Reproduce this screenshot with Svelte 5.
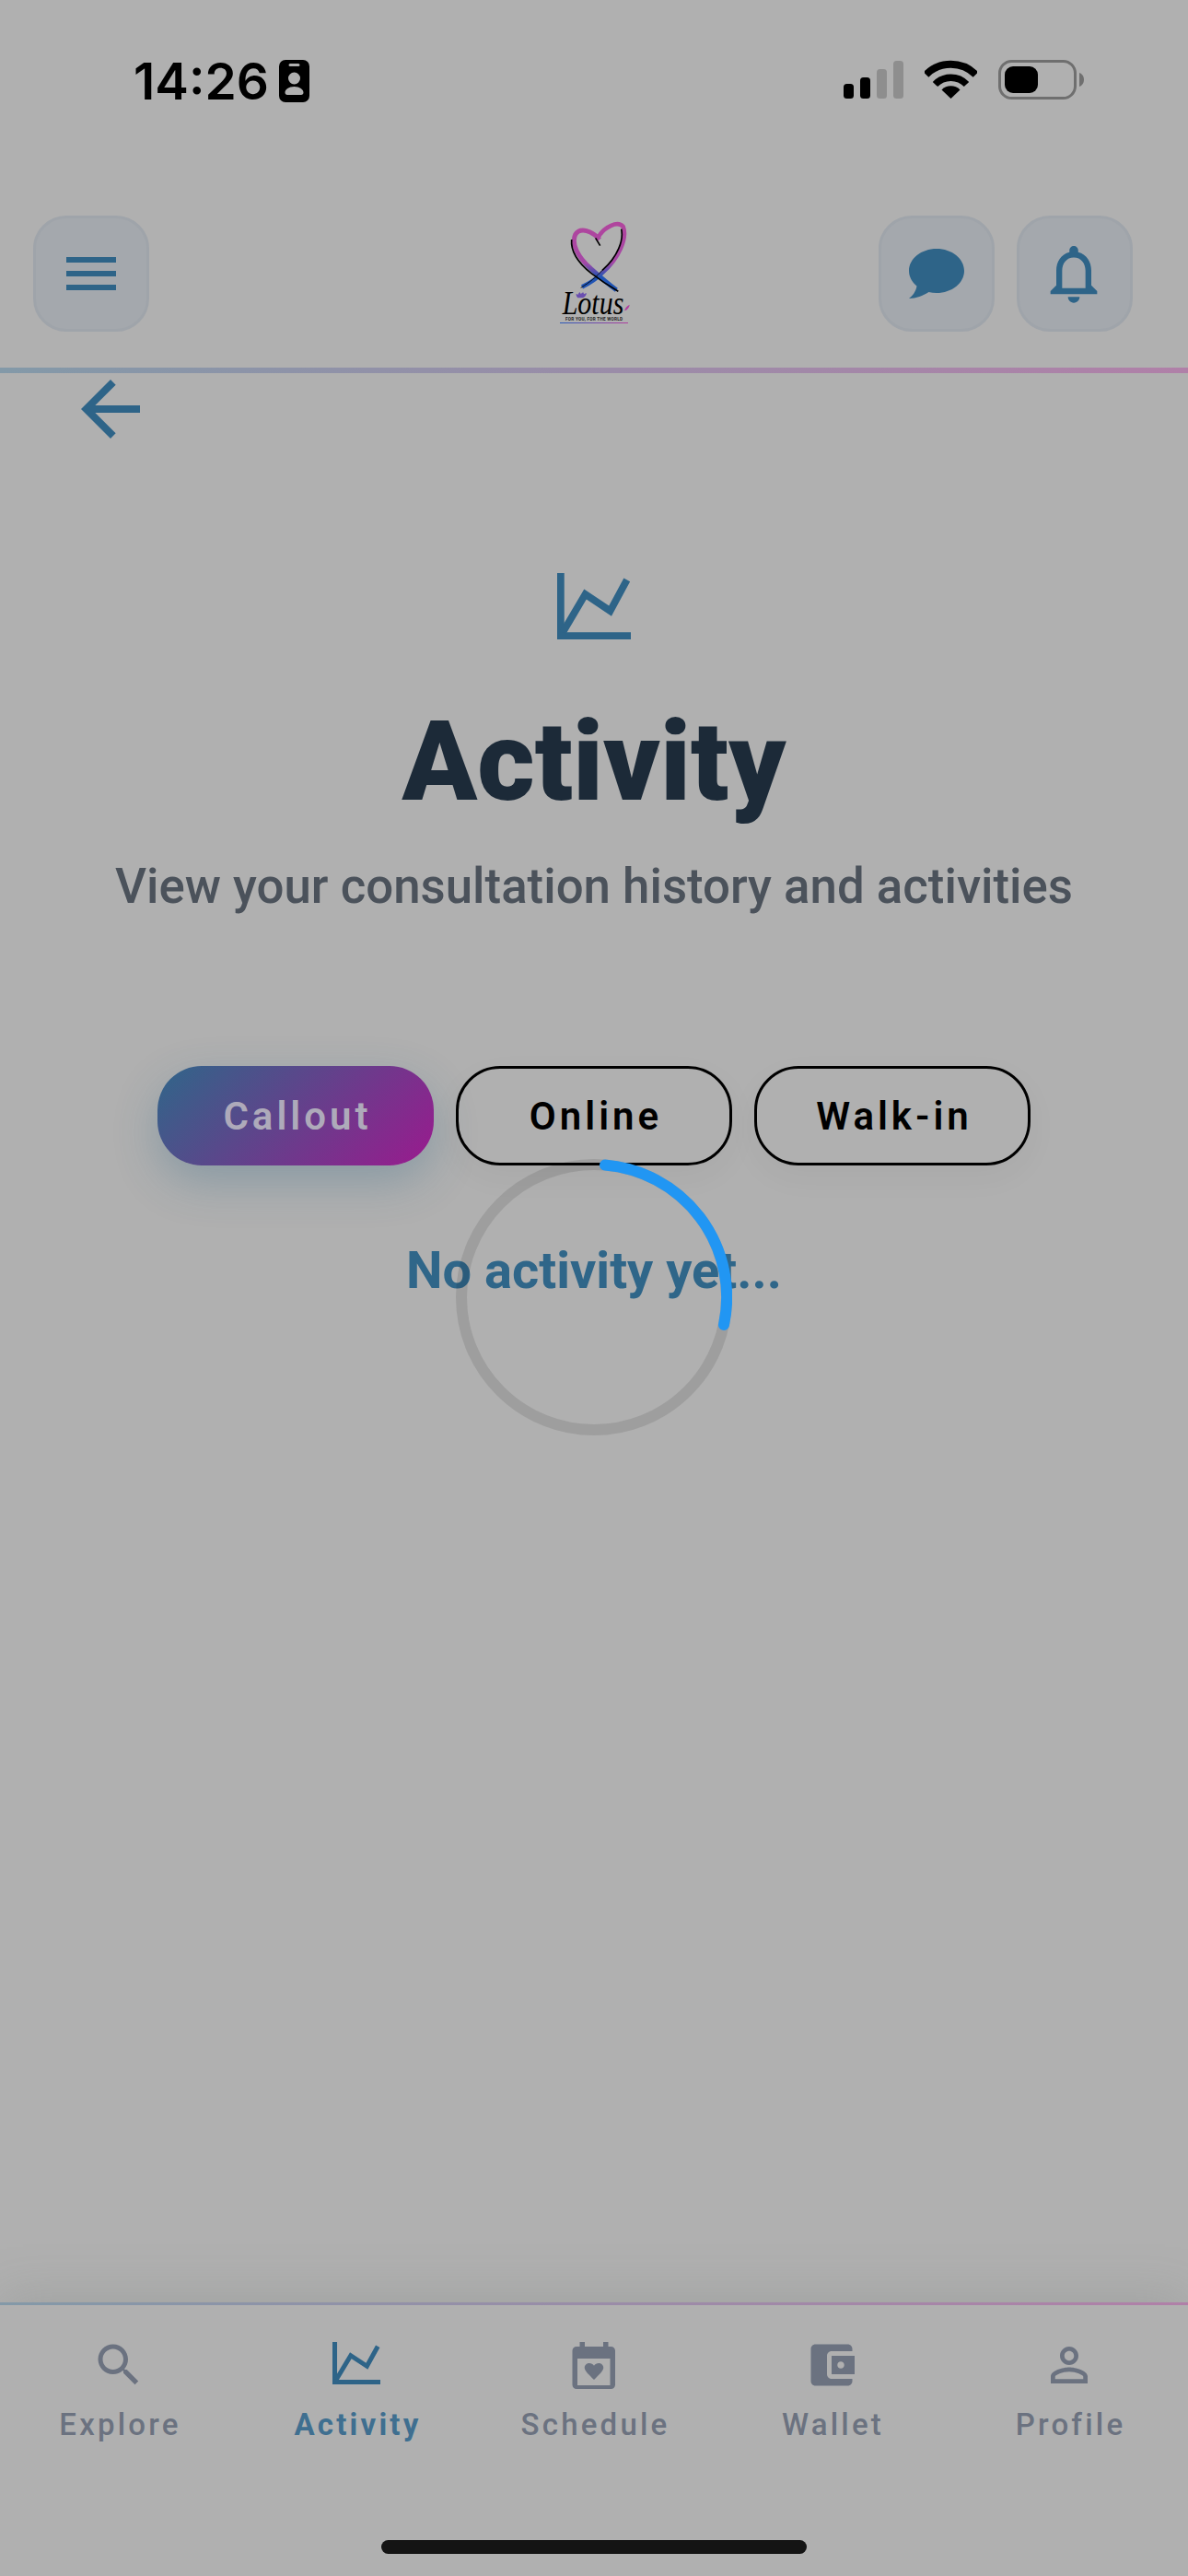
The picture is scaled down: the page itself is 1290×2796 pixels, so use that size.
<script>
  const navItems = [
    { label: 'Explore', d: 'M15.5 14h-.79l-.28-.27C15.41 12.59 16 11.11 16 9.5 16 5.91 13.09 3 9.5 3S3 5.91 3 9.5 5.91 16 9.5 16c1.61 0 3.09-.59 4.23-1.57l.27.28v.79l5 4.99L20.49 19l-4.99-5zm-6 0C7.01 14 5 11.99 5 9.5S7.01 5 9.5 5 14 7.01 14 9.5 11.99 14 9.5 14z' },
    { label: 'Activity', active: true },
    { label: 'Schedule', d: 'M5.8 2H8v2h8V2h2.2v2h1.2a1.8 1.8 0 0 1 1.8 1.8v14.8a1.8 1.8 0 0 1-1.8 1.8H4.4a1.8 1.8 0 0 1-1.8-1.8V5.8A1.8 1.8 0 0 1 4.4 4h1.4z M4.8 9.2v11.6H19V9.2z M12 18.4c-2-2-4.1-3.8-4.1-5.2 0-1.1.9-2 2-2 .9 0 1.6.4 2.1 1.1.5-.7 1.2-1.1 2.1-1.1 1.1 0 2 .9 2 2 0 1.4-2.1 3.2-4.1 5.2z' },
    { label: 'Wallet', d: 'M21 18v1c0 1.1-.9 2-2 2H5c-1.11 0-2-.9-2-2V5c0-1.1.89-2 2-2h14c1.1 0 2 .9 2 2v1h-9c-1.11 0-2 .9-2 2v8c0 1.1.89 2 2 2h9zm-9-2h10V8H12v8zm4-2.5c-.83 0-1.5-.67-1.5-1.5s.67-1.5 1.5-1.5 1.5.67 1.5 1.5-.67 1.5-1.5 1.5z' },
    { label: 'Profile', d: 'M12 5.9c1.16 0 2.1.94 2.1 2.1s-.94 2.1-2.1 2.1S9.9 9.16 9.9 8s.94-2.1 2.1-2.1m0 9c2.97 0 6.1 1.46 6.1 2.1v1.1H5.9V17c0-.64 3.13-2.1 6.1-2.1M12 4C9.79 4 8 5.79 8 8s1.79 4 4 4 4-1.79 4-4-1.79-4-4-4zm0 9c-2.67 0-8 1.34-8 4v3h16v-3c0-2.66-5.33-4-8-4z' }
  ];
  const tabs = ['Callout', 'Online', 'Walk-in'];
</script>

{#snippet chart(cls)}
  <svg class={cls} viewBox="1.6 2 20.7 18.4" preserveAspectRatio="none" fill="none">
    <path d="M1.6 2h2v16.4h18.7v2H1.6z" fill="currentColor" />
    <path d="M3.2 18.4 9.5 7.9l7 4.6 4.7-8.6" stroke="currentColor" stroke-width="2" />
  </svg>
{/snippet}

<div class="screen">
  <div class="status">
    <div class="time-group">
      <span class="time">14:26</span>
      <svg class="badge" viewBox="0 0 33 46">
        <path fill-rule="evenodd" d="M7 0h19a7 7 0 0 1 7 7v32a7 7 0 0 1-7 7H7a7 7 0 0 1-7-7V7a7 7 0 0 1 7-7zM12 4a1.500 1.500 0 0 0 0 3h9a1.500 1.500 0 0 0 0-3zM16.500 13.500a6.500 6.500 0 1 0 0 13 6.500 6.500 0 0 0 0-13zM16.500 29c-6 0-10 3-10 6.500 0 1.500 1 2.500 2.500 2.500h15c1.500 0 2.500-1 2.500-2.500C26.500 32 22.500 29 16.500 29z" fill="#000" />
      </svg>
    </div>
    <div class="sys">
      <svg class="signal" viewBox="0 0 65 41">
        <rect x="0" y="25" width="11" height="16" rx="3.500" fill="#000" />
        <rect x="18" y="18" width="11" height="23" rx="3.500" fill="#000" />
        <rect x="36" y="9" width="11" height="32" rx="3.500" fill="#8e8e8e" />
        <rect x="54" y="0" width="11" height="41" rx="3.500" fill="#8e8e8e" />
      </svg>
      <svg class="wifi" viewBox="0 0 57 42" fill="none">
        <path d="M1.500 16a38 38 0 0 1 54 0" stroke="#000" stroke-width="8" />
        <path d="M11.500 26.500a23.500 23.500 0 0 1 34 0" stroke="#000" stroke-width="7.500" />
        <path d="M28.500 42 18.500 32.500a14 14 0 0 1 20 0z" fill="#000" />
      </svg>
      <svg class="battery" viewBox="0 0 93 43" fill="none">
        <rect x="1.500" y="1.500" width="82" height="40" rx="13" stroke="#6f6f6f" stroke-width="3" />
        <rect x="7" y="7" width="36" height="29" rx="9" fill="#000" />
        <path d="M88 14c3 1 5 4 5 7.500s-2 6.500-5 7.500z" fill="#6f6f6f" />
      </svg>
    </div>
  </div>

  <header class="header">
    <button class="icon-btn" aria-label="Menu">
      <span class="burger"><i></i><i></i><i></i></span>
    </button>
    <svg class="logo" viewBox="0 0 630 480" fill="none">
      <defs>
        <linearGradient id="hg" gradientUnits="userSpaceOnUse" x1="0" y1="100" x2="0" y2="310">
          <stop offset="0" stop-color="#b0459d" />
          <stop offset="0.6" stop-color="#a548a6" />
          <stop offset="0.82" stop-color="#2054b4" />
          <stop offset="1" stop-color="#2054b4" />
        </linearGradient>
        <linearGradient id="ug" x1="0" y1="0" x2="1" y2="0">
          <stop offset="0" stop-color="#2a5ab8" />
          <stop offset="1" stop-color="#b03f9e" />
        </linearGradient>
      </defs>
      <path d="M333 150C310 122 270 108 254 134 240 165 264 208 302 242 322 260 352 288 388 314" stroke="url(#hg)" stroke-width="15" />
      <path d="M330 140C350 108 392 88 410 108 424 145 396 212 342 258 325 276 302 292 276 304" stroke="url(#hg)" stroke-width="14" />
      <path d="M242 150C239 185 262 225 306 260 340 286 365 302 394 319" stroke="#000" stroke-width="5" />
      <path d="M404 116C412 150 394 205 342 250" stroke="#000" stroke-width="5" />
      <path d="M342 250C325 270 300 290 272 307" stroke="#000" stroke-width="2.500" />
      <path d="M320 145 335 170" stroke="#000" stroke-width="5" />
      <text x="212" y="394" class="logo-word" textLength="200" lengthAdjust="spacingAndGlyphs">Lotus</text>
      <path d="M262 340c-6-8-6-12-4-14 3 2 4 3 5 4 1-4 3-7 6-8 1 2 3 4 3 6 2-3 5-5 8-6 1 2 2 4 2 6 3-2 6-3 9-3-1 5-4 12-12 15z" fill="#6a4fb0" />
      <path d="M414 382c2-8 8-16 17-20-1 9-7 17-17 20z" fill="#b03f9e" />
      <text x="222" y="415" class="logo-tag" textLength="186">FOR YOU, FOR THE WORLD</text>
      <rect x="204" y="420" width="222" height="3" fill="url(#ug)" />
    </svg>
    <div class="right">
      <button class="icon-btn" aria-label="Messages">
        <svg class="bubble" viewBox="0 0 60 54">
          <path d="M30 0c16.600 0 30 10.700 30 24S46.600 48 30 48c-3 0-5.800-.3-8.500-1C15 51 8 54 0 54c4-3 7.500-7.500 8.500-13.500C3.300 36 0 30.400 0 24 0 10.700 13.400 0 30 0z" fill="#2e6488" />
        </svg>
      </button>
      <button class="icon-btn" aria-label="Notifications">
        <svg class="bell" viewBox="0 0 24 24">
          <path d="M12 22c1.100 0 2-.9 2-2h-4c0 1.100.9 2 2 2zm6-6v-5c0-3.070-1.630-5.640-4.500-6.320V4c0-.83-.67-1.500-1.500-1.500s-1.500.67-1.500 1.500v.68C7.640 5.360 6 7.920 6 11v5l-2 2v1h16v-1l-2-2zm-2 1H8v-6c0-2.480 1.510-4.500 4-4.500s4 2.020 4 4.500v6z" fill="#2e6488" />
        </svg>
      </button>
    </div>
  </header>
  <div class="rule thick"></div>

  <main class="main">
    <button class="back" aria-label="Back">
      <svg viewBox="0 0 24 24"><path d="M20 11H7.830l5.590-5.590L12 4l-8 8 8 8 1.410-1.410L7.830 13H20v-2z" fill="#2e6488" /></svg>
    </button>
    {@render chart('hero-icon')}
    <h1>Activity</h1>
    <p class="sub">View your consultation history and activities</p>
    <div class="tabs">
      {#each tabs as t, i}
        <button class="tab" class:on={i === 0}>{t}</button>
      {/each}
    </div>
    <p class="empty">No activity yet...</p>
    <svg class="spinner" viewBox="0 0 300 300" fill="none">
      <circle cx="150" cy="150" r="144" stroke="#000" stroke-opacity="0.1" stroke-width="12" />
      <path d="M162 6.500A144 144 0 0 1 291 180" stroke="#2196f3" stroke-width="12" stroke-linecap="round" />
    </svg>
  </main>

  <nav class="nav">
    <div class="rule thin"></div>
    <div class="items">
      {#each navItems as item}
        <div class="item" class:active={item.active}>
          {#if item.active}
            {@render chart('nav-chart')}
          {:else}
            <svg class="nav-icon" viewBox="0 0 24 24"><path d={item.d} fill-rule="evenodd" fill="#6b7280" /></svg>
          {/if}
          <span>{item.label}</span>
        </div>
      {/each}
    </div>
    <div class="home"></div>
  </nav>
</div>

<style>
  :global(body) { margin: 0; background: #b0b0b0; }
  .screen {
    width: 1290px; height: 2796px; background: #b0b0b0;
    display: flex; flex-direction: column; overflow: hidden;
    font-family: Roboto, "Liberation Sans", sans-serif;
    position: relative;
  }
  button { font-family: inherit; padding: 0; }

  .status {
    height: 150px; box-sizing: border-box; padding: 65px 113px 0 145px;
    display: flex; justify-content: space-between; align-items: flex-start;
  }
  .time-group { display: flex; gap: 11px; align-items: flex-start; }
  .time { font-family: Inter, sans-serif; font-weight: 600; font-size: 55px; line-height: 46px; color: #000; font-feature-settings: "case"; }
  .badge { width: 33px; height: 46px; display: block; }
  .sys { display: flex; gap: 23px; align-items: flex-start; }
  .signal { width: 65px; height: 41px; margin-top: 1px; }
  .wifi { width: 57px; height: 42px; }
  .battery { width: 93px; height: 43px; }

  .header {
    display: grid; grid-template-columns: 1fr auto 1fr; align-items: start;
    padding: 84px 36px 39px;
  }
  .icon-btn {
    width: 126px; height: 126px; box-sizing: border-box;
    background: #a4a8ad; border: 3px solid #9fa4aa; border-radius: 36px;
    display: flex; align-items: center; justify-content: center;
  }
  .burger { display: flex; flex-direction: column; gap: 9px; width: 54px; }
  .burger i { display: block; height: 6px; background: #2e6488; }
  .logo { width: 210px; height: 160px; display: block; margin: -24px 0 -10px; }
  .logo-word { font-family: "Liberation Serif", serif; font-style: italic; font-size: 108px; fill: #000; }
  .logo-tag { font-family: Roboto, sans-serif; font-weight: 700; font-size: 14px; fill: #222; }
  .right { justify-self: end; display: flex; gap: 24px; margin-right: 24px; }
  .bubble { width: 60px; height: 54px; margin-left: -1px; }
  .bell { width: 76px; height: 76px; margin-left: -3px; }

  .rule.thick { height: 6px; background: linear-gradient(90deg, #8399a8, #b080a8); flex: none; }
  .rule.thin { height: 3px; background: linear-gradient(90deg, #8399a8, #b080a8); }

  .main {
    flex: 1; display: flex; flex-direction: column; align-items: center;
    position: relative; min-height: 0;
  }
  .back {
    align-self: flex-start; background: none; border: 0;
    width: 96px; height: 96px; margin: -9px 0 0 72px;
  }
  .back svg { width: 96px; height: 96px; display: block; }
  :global(.hero-icon) { width: 80px; height: 72px; color: #2e6488; margin-top: 130px; flex: none; }
  h1 {
    margin: 63px 0 0; font-size: 120px; line-height: 140px; font-weight: 900; color: #1c2a38;
  }
  .sub { margin: 35px 0 0; font-size: 52.8px; line-height: 60px; font-weight: 500; color: #4b525b; }
  .tabs { display: flex; gap: 24px; margin-top: 165px; }
  .tab {
    width: 300px; height: 108px; box-sizing: border-box; border-radius: 48px;
    border: 3px solid #000; background: transparent; color: #000;
    font-size: 42px; font-weight: 600; letter-spacing: 4px; padding-left: 4px;
    box-shadow: 0 12px 36px rgba(0,0,0,.04);
  }
  .tab.on {
    border: 0; color: #aeaaba;
    background: linear-gradient(135deg, #2f6689, #9a1a8e);
    box-shadow: 0 18px 48px rgba(47,102,137,.3);
  }
  .empty { margin: 82px 0 0; font-size: 56px; line-height: 64px; font-weight: 700; color: #2f6689; }
  .spinner { position: absolute; left: 495px; top: 853px; width: 300px; height: 300px; }

  .nav { flex: none; height: 297px; position: relative; box-shadow: 0 -6px 50px rgba(120,125,122,.28); background: #b0b0b0; }
  .items { display: grid; grid-template-columns: repeat(5, 258px); padding-top: 35px; }
  .item { display: flex; flex-direction: column; align-items: center; gap: 15px; }
  .item span { font-size: 33px; line-height: 40px; font-weight: 500; letter-spacing: 3.2px; padding-left: 3px; color: #6b7280; }
  .item.active span { font-weight: 700; color: #3f6f90; }
  .nav-icon { width: 60px; height: 60px; display: block; }
  :global(.nav-chart) { width: 52px; height: 46px; margin: 5px 0 9px; color: #2e6488; display: block; }
  .home {
    position: absolute; left: 414px; top: 258px; width: 462px; height: 15px;
    border-radius: 8px; background: #141414;
  }
</style>
